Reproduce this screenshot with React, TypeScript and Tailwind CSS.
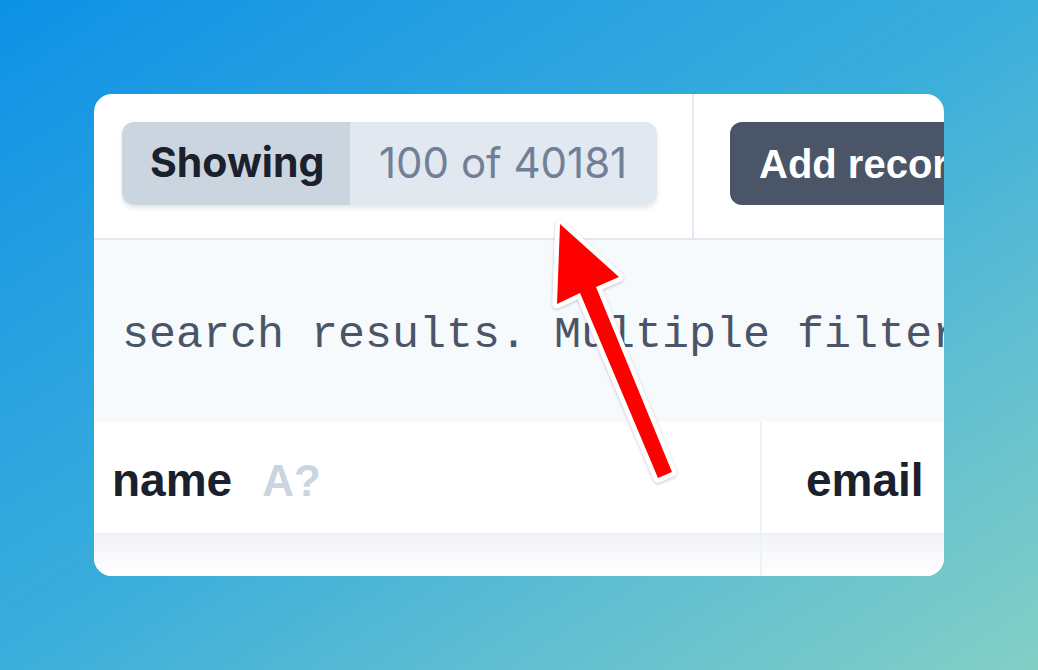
export default function App() {
  return (
    <div className="relative h-[670px] w-[1038px] overflow-hidden bg-linear-to-br from-[#0b91e6] via-[#3aaedb] to-[#82cfc5]">
      <div className="pl-[94px] pt-[94px]">
        <div className="flex h-[482px] w-[850px] flex-col overflow-hidden rounded-[18px] bg-white">
          {/* toolbar */}
          <div className="flex h-[146px] shrink-0 border-b-2 border-[#e2e8f0]">
            <div className="flex w-[600px] shrink-0 items-start border-r-2 border-[#e2e8f0] pl-[28px] pt-[28px]">
              <div className="flex h-[83px] w-[535px] overflow-hidden rounded-[12px] font-['Inter',sans-serif] shadow-[0_3px_4px_rgba(0,0,0,0.1)]">
                <div className="flex w-[228px] items-center bg-[#cbd5e0] pb-[2px] pl-[28px] text-[41px] font-bold text-[#1a202c]">
                  Showing
                </div>
                <div className="flex flex-1 items-center bg-[#e2e8f0] pb-[2px] pl-[29px] text-[42px] text-[#718096]">
                  100 of 40181
                </div>
              </div>
            </div>
            <div className="flex flex-1 items-start pl-[36px] pt-[28px]">
              <div className="flex h-[83px] w-[300px] shrink-0 items-center rounded-[12px] bg-[#4a5568] pl-[29px] font-['Liberation_Sans',Arial,sans-serif] text-[40px] font-bold whitespace-nowrap text-white">
                Add record
              </div>
            </div>
          </div>

          {/* help text */}
          <div className="flex h-[182px] shrink-0 items-center overflow-hidden bg-[#f7fafc] pl-[28px] pt-[8px]">
            <span className="font-['Liberation_Mono',monospace] text-[45px] leading-none whitespace-nowrap text-[#4a5568]">
              search results. Multiple filters can be combined
            </span>
          </div>

          {/* table header */}
          <div className="flex h-[111px] shrink-0 font-['Liberation_Sans',Arial,sans-serif] font-bold">
            <div className="flex w-[668px] shrink-0 items-center border-r-2 border-[#edf2f7] pl-[18px] pt-[6px]">
              <span className="text-[46px] text-[#1a202c]">name</span>
              <span className="ml-[30px] text-[44px] text-[#cbd5e0]">A?</span>
            </div>
            <div className="flex flex-1 items-center pl-[44px] pt-[6px]">
              <span className="text-[46px] text-[#1a202c]">email</span>
            </div>
          </div>

          {/* first row */}
          <div className="flex flex-1 border-t-2 border-[#edf2f7] bg-linear-to-b from-[#f1f3f6] to-white">
            <div className="w-[668px] shrink-0 border-r-2 border-[#edf2f7]" />
            <div className="flex-1" />
          </div>
        </div>
      </div>

      {/* annotation arrow */}
      <svg className="pointer-events-none absolute inset-0" width="1038" height="670" viewBox="0 0 1038 670">
        <defs>
          <filter id="sh" x="-20%" y="-20%" width="140%" height="140%">
            <feDropShadow dx="0" dy="1" stdDeviation="1.5" floodColor="#000" floodOpacity="0.25" />
          </filter>
        </defs>
        <polygon
          points="560,224 619,277 596,287 672,472 658,478 580,293 557,304"
          fill="#ffffff"
          stroke="#ffffff"
          strokeWidth="9"
          strokeLinejoin="round"
          filter="url(#sh)"
        />
        <polygon points="560,224 619,277 596,287 672,472 658,478 580,293 557,304" fill="#ff0000" />
      </svg>
    </div>
  );
}
